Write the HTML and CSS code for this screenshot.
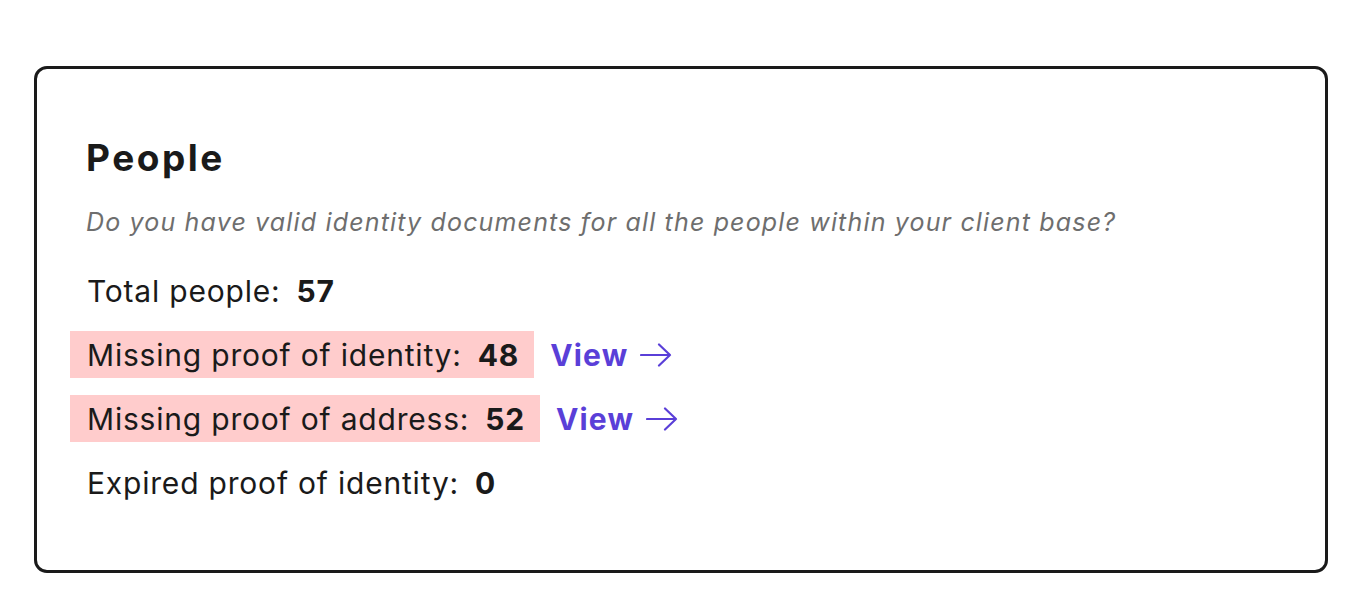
FILE: index.html
```html
<!DOCTYPE html>
<html lang="en">
<head>
<meta charset="utf-8">
<title>People</title>
<link rel="stylesheet" href="styles.css">
</head>
<body>
<section class="card">
  <h2 class="card-title">People</h2>
  <p class="card-subtitle">Do you have valid identity documents for all the people within your client base?</p>
  <ul class="stats">
    <li class="stat"><span class="stat-box"><span class="stat-label">Total people:</span><strong class="stat-value">57</strong></span></li>
    <li class="stat"><span class="stat-box stat-box--alert"><span class="stat-label">Missing proof of identity:</span><strong class="stat-value">48</strong></span><a class="view-link" href="#">View<svg class="arrow" viewBox="0 0 32 24" width="32" height="24" aria-hidden="true"><path d="M1 12H30M19 1.5L30 12L19 22.5" fill="none" stroke="currentColor" stroke-width="2.2" stroke-linecap="round" stroke-linejoin="round"/></svg></a></li>
    <li class="stat"><span class="stat-box stat-box--alert"><span class="stat-label">Missing proof of address:</span><strong class="stat-value">52</strong></span><a class="view-link" href="#">View<svg class="arrow" viewBox="0 0 32 24" width="32" height="24" aria-hidden="true"><path d="M1 12H30M19 1.5L30 12L19 22.5" fill="none" stroke="currentColor" stroke-width="2.2" stroke-linecap="round" stroke-linejoin="round"/></svg></a></li>
    <li class="stat"><span class="stat-box"><span class="stat-label">Expired proof of identity:</span><strong class="stat-value">0</strong></span></li>
  </ul>
</section>
</body>
</html>
```
FILE: styles.css
```css
* { box-sizing: border-box; }
html, body { margin: 0; padding: 0; background: #ffffff; }
body {
  font-family: Inter, "Noto Sans", sans-serif;
  color: #1a1a1a;
  padding: 66px 0 0 34px;
}
.card {
  width: 1294px;
  height: 507px;
  border: 3px solid #1a1a1a;
  border-radius: 13px;
  padding: 67px 50px 0 49px;
}
.card-title {
  margin: 0;
  font-size: 37px;
  line-height: 44px;
  font-weight: 700;
  letter-spacing: 2.5px;
}
.card-subtitle {
  margin: 26px 0 0 0;
  font-size: 25px;
  line-height: 32px;
  font-style: italic;
  color: #6e6e6e;
  letter-spacing: 1.16px;
}
.stats {
  list-style: none;
  margin: 29px 0 0 0;
  padding: 0;
  display: flex;
  flex-direction: column;
  gap: 17px;
}
.stat {
  display: flex;
  align-items: center;
  height: 47px;
}
.stat-box {
  display: flex;
  align-items: center;
  height: 47px;
  margin-left: -16px;
  padding: 0 15px 0 17px;
  font-size: 30px;
  letter-spacing: 0.8px;
}
.stat-box--alert { background: #ffcccc; }
.stat-value {
  font-weight: 700;
  margin-left: 16px;
}
.view-link {
  display: flex;
  align-items: center;
  gap: 12px;
  margin-left: 16px;
  color: #5a3fd8;
  font-weight: 700;
  font-size: 30px;
  text-decoration: none;
  letter-spacing: 1.2px;
}
.arrow { display: block; }
```
